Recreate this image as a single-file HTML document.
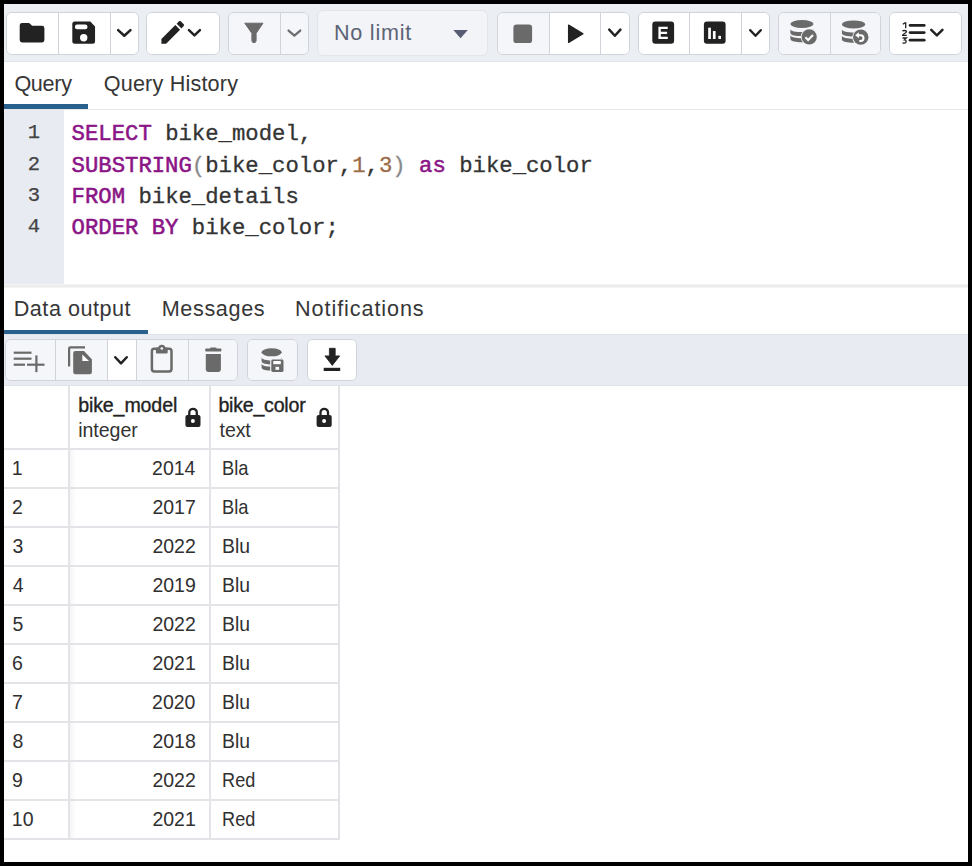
<!DOCTYPE html>
<html><head><meta charset="utf-8">
<style>
*{box-sizing:border-box;margin:0;padding:0}
html,body{width:972px;height:866px;overflow:hidden;background:#fff}
body{position:relative;font-family:"Liberation Sans",sans-serif;color:#222}
.a{position:absolute}
.grp{position:absolute;border:1px solid #d0d3d9;border-radius:6px;overflow:hidden;background:#fff}
.grp>.c{position:absolute;top:0;bottom:0}
.grp>.dv{position:absolute;top:0;bottom:0;width:1px;background:#d0d3d9}
.bd{position:absolute;background:#000}
svg text{font-family:"Liberation Sans",sans-serif}
.code{font-family:"Liberation Mono",monospace;font-size:22.28px;fill:#333;stroke:#333;stroke-width:0.3px;white-space:pre}
.ln{font-family:"Liberation Mono",monospace;font-size:20.5px;fill:#444;stroke:#444;stroke-width:0.25px}
.k{fill:#8b1586;stroke:#8b1586;stroke-width:0.55px}
.n{fill:#9c6b47;stroke:#9c6b47}
.p{fill:#8a8a8a;stroke:#8a8a8a}
</style></head><body>
<div class="a" style="left:0;top:0;width:972px;height:61.5px;background:#ebeef3;border-bottom:1px solid #e0e3e8"></div>
<div class="a" style="left:0;top:108.6px;width:972px;height:1.6px;background:#e4e6e9"></div>
<div class="a" style="left:4px;top:104px;width:84px;height:4.5px;background:#28618e"></div>
<div class="a" style="left:0;top:110px;width:64px;height:174px;background:#e8ebf2"></div>
<div class="a" style="left:0;top:283.7px;width:972px;height:4.6px;background:linear-gradient(#f6f6f6,#e9e9e9 50%,#f7f7f7)"></div>
<div class="a" style="left:4px;top:329.6px;width:143.7px;height:4.3px;background:#28618e"></div>
<div class="a" style="left:0;top:334px;width:972px;height:52px;background:#e8ebf2;border-top:1px solid #dfe2e7;border-bottom:1px solid #dfe2e7"></div>
<div class="grp" style="left:6px;top:12px;width:132.50px;height:43.00px"><div class="c" style="left:0.00px;width:52.00px;background:#fff"></div><div class="c" style="left:52.00px;width:51.50px;background:#fff"></div><div class="c" style="left:103.50px;width:29.00px;background:#fff"></div><div class="dv" style="left:51.00px"></div><div class="dv" style="left:102.50px"></div></div><div class="grp" style="left:146.4px;top:12px;width:74.00px;height:43.00px"><div class="c" style="left:0.00px;width:74.00px;background:#fff"></div></div><div class="grp" style="left:228px;top:12px;width:80.70px;height:43.00px"><div class="c" style="left:0.00px;width:52.00px;background:#f5f6f9"></div><div class="c" style="left:52.00px;width:28.70px;background:#f5f6f9"></div><div class="dv" style="left:51.00px"></div></div><div class="grp" style="left:317px;top:10px;width:171.3px;height:45.5px;background:#f3f4f8;border-color:#e2e5ea"></div><div class="grp" style="left:496.6px;top:12px;width:133.00px;height:43.00px"><div class="c" style="left:0.00px;width:52.20px;background:#f5f6f9"></div><div class="c" style="left:52.20px;width:51.20px;background:#fff"></div><div class="c" style="left:103.40px;width:29.60px;background:#fff"></div><div class="dv" style="left:51.20px"></div><div class="dv" style="left:102.40px"></div></div><div class="grp" style="left:637.7px;top:12px;width:132.70px;height:43.00px"><div class="c" style="left:0.00px;width:51.50px;background:#fff"></div><div class="c" style="left:51.50px;width:51.40px;background:#fff"></div><div class="c" style="left:102.90px;width:29.80px;background:#fff"></div><div class="dv" style="left:50.50px"></div><div class="dv" style="left:101.90px"></div></div><div class="grp" style="left:778px;top:12px;width:102.50px;height:43.00px"><div class="c" style="left:0.00px;width:51.80px;background:#f5f6f9"></div><div class="c" style="left:51.80px;width:50.70px;background:#f5f6f9"></div><div class="dv" style="left:50.80px"></div></div><div class="grp" style="left:888.8px;top:12px;width:73.60px;height:43.00px"><div class="c" style="left:0.00px;width:73.60px;background:#fff"></div></div><div class="grp" style="left:5px;top:339px;width:232.50px;height:42.40px"><div class="c" style="left:0.00px;width:49.50px;background:#f5f6f9"></div><div class="c" style="left:49.50px;width:52.10px;background:#f5f6f9"></div><div class="c" style="left:101.60px;width:29.20px;background:#fff"></div><div class="c" style="left:130.80px;width:51.90px;background:#f5f6f9"></div><div class="c" style="left:182.70px;width:49.80px;background:#f5f6f9"></div><div class="dv" style="left:48.50px"></div><div class="dv" style="left:100.60px"></div><div class="dv" style="left:129.80px"></div><div class="dv" style="left:181.70px"></div></div><div class="grp" style="left:247.4px;top:339px;width:50.20px;height:42.40px"><div class="c" style="left:0.00px;width:50.20px;background:#f5f6f9"></div></div><div class="grp" style="left:306.5px;top:339px;width:50.30px;height:42.40px"><div class="c" style="left:0.00px;width:50.30px;background:#fff"></div></div>
<div class="a" style="left:68px;top:386px;width:2px;height:452.9px;background:#e3e4e7"></div><div class="a" style="left:208.5px;top:386px;width:2px;height:452.9px;background:#e3e4e7"></div><div class="a" style="left:338px;top:386px;width:2px;height:452.9px;background:#e3e4e7"></div><div class="a" style="left:4px;top:447.5px;width:336px;height:2px;background:#e3e4e7"></div><div class="a" style="left:70px;top:449.5px;width:6px;height:389px;background:linear-gradient(to right,rgba(0,0,0,0.045),rgba(0,0,0,0))"></div><div class="a" style="left:4px;top:486.55px;width:336px;height:2px;background:#e3e4e7"></div><div class="a" style="left:4px;top:525.60px;width:336px;height:2px;background:#e3e4e7"></div><div class="a" style="left:4px;top:564.65px;width:336px;height:2px;background:#e3e4e7"></div><div class="a" style="left:4px;top:603.70px;width:336px;height:2px;background:#e3e4e7"></div><div class="a" style="left:4px;top:642.75px;width:336px;height:2px;background:#e3e4e7"></div><div class="a" style="left:4px;top:681.80px;width:336px;height:2px;background:#e3e4e7"></div><div class="a" style="left:4px;top:720.85px;width:336px;height:2px;background:#e3e4e7"></div><div class="a" style="left:4px;top:759.90px;width:336px;height:2px;background:#e3e4e7"></div><div class="a" style="left:4px;top:798.95px;width:336px;height:2px;background:#e3e4e7"></div><div class="a" style="left:4px;top:838.00px;width:336px;height:2px;background:#e3e4e7"></div>
<svg class="a" style="left:0;top:0" width="972" height="866">
<path d="M19.7 25.3a2.4 2.4 0 0 1 2.4-2.4h6.6a1.6 1.6 0 0 1 1.1.5l2.3 2.4h9.9a2.4 2.4 0 0 1 2.4 2.4v11.9a2.4 2.4 0 0 1-2.4 2.4H22.1a2.4 2.4 0 0 1-2.4-2.4z" fill="#222"/><path d="M74.8 21.5h15.5l4.75 5v14.7a2.5 2.5 0 0 1-2.5 2.5H74.8a2.5 2.5 0 0 1-2.5-2.5V24a2.5 2.5 0 0 1 2.5-2.5z" fill="#222"/><rect x="75" y="24.4" width="12.4" height="4.8" rx="2" fill="#fff"/><circle cx="83.7" cy="37.8" r="3.7" fill="#fff"/><path d="M118.15 30.05L124.30 35.75L130.45 30.05" stroke="#222" stroke-width="2.5" stroke-linecap="round" stroke-linejoin="round" fill="none"/><path transform="translate(157.62 17.22) scale(1.26)" d="M3 17.25V21h3.75L17.81 9.94l-3.75-3.75L3 17.25zM20.71 7.04c.39-.39.39-1.02 0-1.41l-2.34-2.34a.9959.9959 0 0 0-1.41 0l-1.83 1.83 3.75 3.75 1.83-1.83z" fill="#222"/><path d="M188.95 30.15L194.45 35.35L199.95 30.15" stroke="#222" stroke-width="2.5" stroke-linecap="round" stroke-linejoin="round" fill="none"/><path d="M244.8 23.2H263L256.1 33.3V40.6a2.1 2.1 0 0 1-4.2 0V33.3z" fill="#6a6a6a" stroke="#6a6a6a" stroke-width="1" stroke-linejoin="round"/><path d="M288.55 30.55L294.40 35.55L300.25 30.55" stroke="#6e6e6e" stroke-width="2.3" stroke-linecap="round" stroke-linejoin="round" fill="none"/><path d="M453.3 30h14.5l-7.25 8.3z" fill="#585d74"/><rect x="513.4" y="24.4" width="18.7" height="18.7" rx="3.2" fill="#6a6a6a"/><path d="M568.6 25.1L583 33.75 568.6 42.4z" fill="#222" stroke="#222" stroke-width="1.3" stroke-linejoin="round"/><path d="M609.25 29.65L614.85 35.75L620.45 29.65" stroke="#222" stroke-width="2.5" stroke-linecap="round" stroke-linejoin="round" fill="none"/><rect x="652.3" y="21.4" width="21.8" height="22.4" rx="3" fill="#222"/><path d="M658.4 26.8h9.3v2.3h-6.9v2.7h6.3v2.2h-6.3v2.7h7v2.3h-9.4z" fill="#fff"/><rect x="703.9" y="21.4" width="21.7" height="22.4" rx="3" fill="#222"/><rect x="708.2" y="27.7" width="2.7" height="11.3" fill="#fff"/><rect x="712.9" y="31" width="2.7" height="8" fill="#fff"/><rect x="718.4" y="35.7" width="2.6" height="3.3" rx=".6" fill="#fff"/><path d="M750.25 30.25L755.50 35.75L760.75 30.25" stroke="#222" stroke-width="2.5" stroke-linecap="round" stroke-linejoin="round" fill="none"/><ellipse cx="801.95" cy="24.00" rx="11.55" ry="4" fill="#6a6a6a"/><path d="M790.40 28.90c0 2.1 5.78 3.2 11.55 3.2s11.55 -1.1 11.55 -3.2v4c0 2.1 -5.78 3.2 -11.55 3.2S790.40 35.00 790.40 32.90z" fill="#6a6a6a"/><path d="M790.40 35.10c0 2.1 5.78 3.2 11.55 3.2s11.55 -1.1 11.55 -3.2v4c0 2.1 -5.78 3.2 -11.55 3.2S790.40 41.20 790.40 39.10z" fill="#6a6a6a"/><circle cx="809.2" cy="36.95" r="8.4" fill="#f5f6f9"/><circle cx="809.2" cy="36.95" r="7.6" fill="#6a6a6a"/><path d="M805.4 37.2l2.7 2.7 4.9-4.9" stroke="#fff" stroke-width="2.1" fill="none"/><ellipse cx="853.60" cy="24.40" rx="11.70" ry="4" fill="#6a6a6a"/><path d="M841.90 29.30c0 2.1 5.85 3.2 11.70 3.2s11.70 -1.1 11.70 -3.2v4c0 2.1 -5.85 3.2 -11.70 3.2S841.90 35.40 841.90 33.30z" fill="#6a6a6a"/><path d="M841.90 35.50c0 2.1 5.85 3.2 11.70 3.2s11.70 -1.1 11.70 -3.2v4c0 2.1 -5.85 3.2 -11.70 3.2S841.90 41.60 841.90 39.50z" fill="#6a6a6a"/><circle cx="860.75" cy="37.15" r="8.5" fill="#f5f6f9"/><circle cx="860.75" cy="37.15" r="7.7" fill="#6a6a6a"/><path d="M858.3 35.2h2.3a2.9 2.9 0 0 1 0 5.8h-1.3" stroke="#fff" stroke-width="2" fill="none"/><path d="M855.2 35.2l3.6-3v6z" fill="#fff"/><path d="M902.8 24.2l2-1.2h.9v5.3" stroke="#222" stroke-width="1.3" fill="none"/><path d="M902.6 31.3c.3-1 3.9-1.3 3.9.4 0 1.3-3.9 2.3-3.9 3.6h4.2" stroke="#222" stroke-width="1.3" fill="none"/><path d="M902.6 38h3.8l-1.9 1.9c2.3 0 2.3 3.3-.2 3.3-.7 0-1.4-.2-1.8-.5" stroke="#222" stroke-width="1.3" fill="none"/><rect x="908.7" y="24" width="16.9" height="2.8" rx="1.4" fill="#222"/><rect x="908.7" y="31.2" width="16.9" height="2.8" rx="1.4" fill="#222"/><rect x="908.7" y="38.8" width="16.9" height="2.8" rx="1.4" fill="#222"/><path d="M931.25 29.95L936.85 35.35L942.45 29.95" stroke="#222" stroke-width="2.5" stroke-linecap="round" stroke-linejoin="round" fill="none"/><rect x="13.7" y="351.6" width="17.8" height="2.2" fill="#6a6a6a"/><rect x="13.7" y="357.6" width="17.8" height="2.2" fill="#6a6a6a"/><rect x="13.7" y="363.6" width="11.3" height="2.2" fill="#6a6a6a"/><rect x="27" y="363.6" width="17.5" height="2.2" fill="#6a6a6a"/><rect x="35.3" y="355.4" width="2.2" height="16.7" fill="#6a6a6a"/><path d="M68 366.5V348.6a2.4 2.4 0 0 1 2.4-2.4H85v2.2H70.6a.4.4 0 0 0-.4.4V366.5z" fill="#6a6a6a"/><path d="M75.4 351.1H84L91.9 359.3V372a2.2 2.2 0 0 1-2.2 2.2H75.4a2.2 2.2 0 0 1-2.2-2.2V353.3a2.2 2.2 0 0 1 2.2-2.2z" fill="#6a6a6a"/><path d="M82.3 354.4V361.1H89z" fill="#fff"/><path d="M115.25 357.25L121.00 363.45L126.75 357.25" stroke="#222" stroke-width="2.5" stroke-linecap="round" stroke-linejoin="round" fill="none"/><rect x="151.9" y="348.8" width="19.6" height="22.6" rx="2.4" fill="none" stroke="#6a6a6a" stroke-width="2.5"/><rect x="155.9" y="347.5" width="11.8" height="5.9" rx=".8" fill="#6a6a6a"/><circle cx="161.8" cy="348.3" r="3.6" fill="#6a6a6a"/><circle cx="161.8" cy="348.5" r="1.3" fill="#f5f6f9"/><rect x="205.2" y="348.6" width="16.2" height="3" rx="1" fill="#6a6a6a"/><rect x="210" y="347.6" width="6.6" height="2" rx="1" fill="#6a6a6a"/><path d="M205.8 354h15.1v15.6a2.3 2.3 0 0 1-2.3 2.3H208.1a2.3 2.3 0 0 1-2.3-2.3z" fill="#6a6a6a"/><ellipse cx="271.65" cy="352.30" rx="10.05" ry="4" fill="#6a6a6a"/><path d="M261.60 357.20c0 2.1 5.03 3.2 10.05 3.2s10.05 -1.1 10.05 -3.2v4c0 2.1 -5.03 3.2 -10.05 3.2S261.60 363.30 261.60 361.20z" fill="#6a6a6a"/><path d="M261.60 363.40c0 2.1 5.03 3.2 10.05 3.2s10.05 -1.1 10.05 -3.2v4c0 2.1 -5.03 3.2 -10.05 3.2S261.60 369.50 261.60 367.40z" fill="#6a6a6a"/><rect x="270.2" y="358.5" width="14.3" height="14.5" rx="1.6" fill="#f5f6f9"/><rect x="271.3" y="359.5" width="12.2" height="12.5" rx="1.4" fill="#6a6a6a"/><rect x="273.3" y="361" width="7.5" height="3.2" fill="#fff"/><rect x="275.5" y="366.8" width="3.6" height="3" fill="#fff"/><path d="M329.4 348.3h5.8v7.6h4.5L332.3 365.4 324.9 355.9h4.5z" fill="#222" stroke="#222" stroke-width=".8" stroke-linejoin="round"/><rect x="323.7" y="367.8" width="16.5" height="3.2" fill="#222"/><path d="M189.30 416V412.55a3.75 3.75 0 0 1 7.5 0V416" stroke="#222" stroke-width="2.3" fill="none"/><rect x="185.40" y="415" width="15.1" height="11.9" rx="2" fill="#222"/><circle cx="192.90" cy="420.9" r="2" fill="#fff"/><path d="M320.50 416V412.55a3.75 3.75 0 0 1 7.5 0V416" stroke="#222" stroke-width="2.3" fill="none"/><rect x="316.60" y="415" width="15.1" height="11.9" rx="2" fill="#222"/><circle cx="324.10" cy="420.9" r="2" fill="#fff"/>
<text x="14.39" y="91.30" letter-spacing="-0.302" font-family="Liberation Sans" font-weight="normal" font-size="21.6" fill="#363636">Query</text>
<text x="103.69" y="91.30" letter-spacing="0.191" font-family="Liberation Sans" font-weight="normal" font-size="21.6" fill="#363636">Query History</text>
<text x="13.71" y="316.10" letter-spacing="0.523" font-family="Liberation Sans" font-weight="normal" font-size="21.6" fill="#363636">Data output</text>
<text x="161.71" y="316.10" letter-spacing="0.645" font-family="Liberation Sans" font-weight="normal" font-size="21.6" fill="#363636">Messages</text>
<text x="295.11" y="316.10" letter-spacing="0.909" font-family="Liberation Sans" font-weight="normal" font-size="21.6" fill="#363636">Notifications</text>
<text x="333.91" y="39.60" letter-spacing="0.773" font-family="Liberation Sans" font-weight="normal" font-size="21.6" fill="#5c6376">No limit</text>
<text x="78.18" y="411.70" letter-spacing="-0.125" font-family="Liberation Sans" font-weight="normal" font-size="19.6" fill="#222" stroke="#222" stroke-width="0.35">bike_model</text>
<text x="78.18" y="436.60" letter-spacing="-0.051" font-family="Liberation Sans" font-weight="normal" font-size="19.6" fill="#333">integer</text>
<text x="218.38" y="411.70" letter-spacing="-0.224" font-family="Liberation Sans" font-weight="normal" font-size="19.6" fill="#222" stroke="#222" stroke-width="0.35">bike_color</text>
<text x="219.60" y="436.60" letter-spacing="-0.120" font-family="Liberation Sans" font-weight="normal" font-size="19.6" fill="#333">text</text>
<text transform="translate(11.78 474.80) scale(0.9955 1)" font-size="19.6" fill="#303030">1</text>
<text transform="translate(152.08 474.80) scale(0.9955 1)" font-size="19.6" fill="#303030">2014</text>
<text transform="translate(222.07 474.80) scale(0.9323 1)" font-size="19.6" fill="#303030">Bla</text>
<text transform="translate(12.09 513.85) scale(0.9955 1)" font-size="19.6" fill="#303030">2</text>
<text transform="translate(152.39 513.85) scale(0.9955 1)" font-size="19.6" fill="#303030">2017</text>
<text transform="translate(222.07 513.85) scale(0.9323 1)" font-size="19.6" fill="#303030">Bla</text>
<text transform="translate(12.39 552.90) scale(0.9955 1)" font-size="19.6" fill="#303030">3</text>
<text transform="translate(152.39 552.90) scale(0.9955 1)" font-size="19.6" fill="#303030">2022</text>
<text transform="translate(221.99 552.90) scale(0.9885 1)" font-size="19.6" fill="#303030">Blu</text>
<text transform="translate(12.70 591.95) scale(0.9955 1)" font-size="19.6" fill="#303030">4</text>
<text transform="translate(152.39 591.95) scale(0.9955 1)" font-size="19.6" fill="#303030">2019</text>
<text transform="translate(221.99 591.95) scale(0.9885 1)" font-size="19.6" fill="#303030">Blu</text>
<text transform="translate(12.39 631.00) scale(0.9955 1)" font-size="19.6" fill="#303030">5</text>
<text transform="translate(152.39 631.00) scale(0.9955 1)" font-size="19.6" fill="#303030">2022</text>
<text transform="translate(221.99 631.00) scale(0.9885 1)" font-size="19.6" fill="#303030">Blu</text>
<text transform="translate(12.09 670.05) scale(0.9955 1)" font-size="19.6" fill="#303030">6</text>
<text transform="translate(152.39 670.05) scale(0.9955 1)" font-size="19.6" fill="#303030">2021</text>
<text transform="translate(221.99 670.05) scale(0.9885 1)" font-size="19.6" fill="#303030">Blu</text>
<text transform="translate(12.09 709.10) scale(0.9955 1)" font-size="19.6" fill="#303030">7</text>
<text transform="translate(152.08 709.10) scale(0.9955 1)" font-size="19.6" fill="#303030">2020</text>
<text transform="translate(221.99 709.10) scale(0.9885 1)" font-size="19.6" fill="#303030">Blu</text>
<text transform="translate(12.39 748.15) scale(0.9955 1)" font-size="19.6" fill="#303030">8</text>
<text transform="translate(152.39 748.15) scale(0.9955 1)" font-size="19.6" fill="#303030">2018</text>
<text transform="translate(221.99 748.15) scale(0.9885 1)" font-size="19.6" fill="#303030">Blu</text>
<text transform="translate(12.09 787.20) scale(0.9955 1)" font-size="19.6" fill="#303030">9</text>
<text transform="translate(152.39 787.20) scale(0.9955 1)" font-size="19.6" fill="#303030">2022</text>
<text transform="translate(222.08 787.20) scale(0.9243 1)" font-size="19.6" fill="#303030">Red</text>
<text transform="translate(11.78 826.25) scale(0.9955 1)" font-size="19.6" fill="#303030">10</text>
<text transform="translate(152.39 826.25) scale(0.9955 1)" font-size="19.6" fill="#303030">2021</text>
<text transform="translate(222.08 826.25) scale(0.9243 1)" font-size="19.6" fill="#303030">Red</text>
<text class="code" x="71.60" y="140.20"><tspan class="k">SELECT</tspan> bike_model,</text>
<text class="code" x="71.60" y="171.50"><tspan class="k">SUBSTRING</tspan><tspan class="p">(</tspan>bike_color,<tspan class="n">1</tspan>,<tspan class="n">3</tspan><tspan class="p">)</tspan> <tspan class="k">as</tspan> bike_color</text>
<text class="code" x="71.60" y="202.90"><tspan class="k">FROM</tspan> bike_details</text>
<text class="code" x="71.60" y="234.20"><tspan class="k">ORDER BY</tspan> bike_color;</text>
<text class="ln" x="40" y="138.40" text-anchor="end">1</text>
<text class="ln" x="40" y="169.70" text-anchor="end">2</text>
<text class="ln" x="40" y="201.10" text-anchor="end">3</text>
<text class="ln" x="40" y="232.40" text-anchor="end">4</text>
</svg>
<div class="bd" style="left:0;top:0;width:972px;height:4px"></div>
<div class="bd" style="left:0;top:862px;width:972px;height:4px"></div>
<div class="bd" style="left:0;top:0;width:4px;height:866px"></div>
<div class="bd" style="left:968px;top:0;width:4px;height:866px"></div>
</body></html>
